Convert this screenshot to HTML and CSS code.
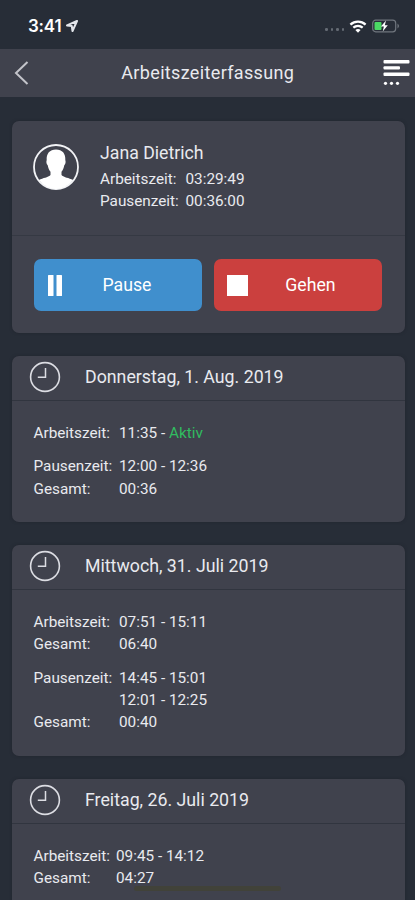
FILE: index.html
```
<!DOCTYPE html>
<html lang="de">
<head>
<meta charset="utf-8">
<meta name="viewport" content="width=device-width, initial-scale=1">
<title>Arbeitszeiterfassung</title>
<link rel="stylesheet" href="styles.css">
</head>
<body>
<div class="screen">
  <header class="status">
    <span class="clock">3:41</span>
    <svg class="location" width="12" height="12" viewBox="0 0 12 12"><path d="M11 1 1 5.400 5.800 6.100 6.500 11Z" fill="none" stroke="currentColor" stroke-width="2" stroke-linejoin="round"/></svg>
    <span class="signal"><i></i><i></i><i></i><i></i></span>
    <svg class="wifi" width="18" height="13" viewBox="0 0 18 13"><g fill="none" stroke="#fff" stroke-width="2.300"><path d="M1.400 4.600C5.800.6 12.200.6 16.600 4.600"/><path d="M4.300 7.700c2.800-2.400 6.600-2.400 9.400 0"/></g><path d="M6.400 9.900c1.500-1.300 3.700-1.300 5.200 0L9 12.700Z" fill="#fff"/></svg>
    <svg class="battery" width="28" height="14" viewBox="0 0 28 14"><rect x=".7" y="1.200" width="23" height="11.600" rx="3" fill="none" stroke="#70767e" stroke-width="1.200"/><path d="M25.500 4.500q3 2.500 0 5Z" fill="#70767e"/><rect x="2.500" y="3" width="7" height="8" rx="1" fill="#4bd964"/><path d="M14 1.400 8.900 7.600h3L10.700 12.600l5.100-6.300h-3Z" fill="#fff"/></svg>
  </header>
  <nav class="nav">
    <svg width="15" height="24" viewBox="0 0 15 24"><path d="M13.500 1 2 12 13.500 23" fill="none" stroke="#c3c4ca" stroke-width="2"/></svg>
    <h1>Arbeitszeiterfassung</h1>
    <svg width="28" height="26" viewBox="0 0 28 26" fill="#fff"><rect x="1.500" y="0" width="26" height="3.400" rx="1"/><rect x="1.500" y="6.200" width="16.500" height="3.400" rx="1"/><rect x="1.500" y="12.500" width="26" height="3.400" rx="1"/><circle cx="3.500" cy="23.300" r="1.600"/><circle cx="9.500" cy="23.300" r="1.600"/><circle cx="15.500" cy="23.300" r="1.600"/></svg>
  </nav>
  <main class="cards">
    <section class="card current">
      <div class="profile">
        <svg width="46" height="48" viewBox="0 0 46 48"><circle cx="23" cy="24" r="22" fill="none" stroke="#f2f3f6" stroke-width="1.800"/><path d="M23 6.500c6.300 0 9.800 4.200 9.300 10.400.7 2.200.2 4.300-1 5.300-.6 3.100-1.400 4.800-2.800 6.500v3.200c2.800 2.800 7.200 2.500 11.600 5.200A22 22 0 0 1 23 46 22 22 0 0 1 5.900 37.100c4.400-2.700 8.800-2.400 11.600-5.200v-3.200c-1.400-1.700-2.200-3.400-2.800-6.500-1.200-1-1.700-3.100-1-5.300C13.200 10.700 16.700 6.500 23 6.500Z" fill="#fff"/></svg>
        <div class="person">
          <h2>Jana Dietrich</h2>
          <dl class="times"><dt>Arbeitszeit:</dt><dd>03:29:49</dd><dt>Pausenzeit:</dt><dd>00:36:00</dd></dl>
        </div>
      </div>
      <div class="actions">
        <button class="btn pause"><svg width="14" height="21" viewBox="0 0 14 21" fill="#fff"><rect width="5.500" height="21" rx=".5"/><rect x="8.500" width="5.500" height="21" rx=".5"/></svg><span>Pause</span></button>
        <button class="btn leave"><svg width="21" height="21" viewBox="0 0 21 21"><rect width="21" height="21" fill="#fff"/></svg><span>Gehen</span></button>
      </div>
    </section>
    <section class="card day first">
      <div class="date"><svg width="32" height="32" viewBox="0 0 32 32" fill="none" stroke="#dcdde3"><circle cx="16" cy="16" r="14.400" stroke-width="1.600"/><path d="M16.500 7v9.300H8.800" stroke-width="1.500"/></svg><h2>Donnerstag, 1. Aug. 2019</h2></div>
      <dl class="times"><dt>Arbeitszeit:</dt><dd>11:35 - <span class="active">Aktiv</span></dd></dl>
      <dl class="times"><dt>Pausenzeit:</dt><dd>12:00 - 12:36</dd><dt>Gesamt:</dt><dd>00:36</dd></dl>
    </section>
    <section class="card day second">
      <div class="date"><svg width="32" height="32" viewBox="0 0 32 32" fill="none" stroke="#dcdde3"><circle cx="16" cy="16" r="14.400" stroke-width="1.600"/><path d="M16.500 7v9.300H8.800" stroke-width="1.500"/></svg><h2>Mittwoch, 31. Juli 2019</h2></div>
      <dl class="times"><dt>Arbeitszeit:</dt><dd>07:51 - 15:11</dd><dt>Gesamt:</dt><dd>06:40</dd></dl>
      <dl class="times"><dt>Pausenzeit:</dt><dd>14:45 - 15:01</dd><dd>12:01 - 12:25</dd><dt>Gesamt:</dt><dd>00:40</dd></dl>
    </section>
    <section class="card day third">
      <div class="date"><svg width="32" height="32" viewBox="0 0 32 32" fill="none" stroke="#dcdde3"><circle cx="16" cy="16" r="14.400" stroke-width="1.600"/><path d="M16.500 7v9.300H8.800" stroke-width="1.500"/></svg><h2>Freitag, 26. Juli 2019</h2></div>
      <dl class="times"><dt>Arbeitszeit:</dt><dd>09:45 - 14:12</dd><dt>Gesamt:</dt><dd>04:27</dd></dl>
    </section>
  </main>
  <div class="home-bar"></div>
</div>
</body>
</html>
```
FILE: styles.css
```
* { box-sizing: border-box; }
body { margin: 0; background: #272d37; }
h1, h2, dl, dd { margin: 0; font-weight: 400; }
svg { display: block; flex: none; }
.screen {
  position: relative;
  height: 900px;
  overflow: hidden;
  background: #272d37;
  color: #e9eaef;
  font-family: Roboto, "Liberation Sans", sans-serif;
}
.status { height: 49px; display: flex; align-items: center; padding: 3px 15px 0 28px; }
.clock { font: 600 17px/20px Inter, sans-serif; letter-spacing: -.2px; color: #fff; width: 36px; }
.location { color: #e3e6eb; margin-left: 2px; }
.signal { display: flex; gap: 3px; margin: 7px 5px 0 auto; }
.signal i { width: 2.500px; height: 2.500px; border-radius: 50%; background: #656b74; }
.wifi { margin-right: 5px; }
.nav {
  height: 48px;
  display: flex;
  align-items: center;
  justify-content: space-between;
  padding: 0 5px 0 14px;
  background: #40424d;
}
.nav h1 { font-size: 18px; line-height: 24px; letter-spacing: .35px; margin-left: 4.500px; }
.cards { padding: 23.500px 10.500px 0 11.500px; display: flex; flex-direction: column; gap: 22.500px; }
.card { flex: none; border-radius: 7px; background: #40424d; box-shadow: 0 0 3px #20252e; }
.current { height: 212.500px; }
.profile { height: 115.500px; display: flex; padding: 22.500px 0 0 21.500px; gap: 21px; border-bottom: 1px solid #353943; }
.person h2 { font-size: 17.700px; line-height: 22px; margin-top: -1px; margin-bottom: 4px; }
.times { display: grid; grid-template-columns: 85.500px auto; justify-content: start; font-size: 15.300px; line-height: 22.300px; white-space: nowrap; }
.times dt { grid-column: 1; }
.times dd { grid-column: 2; }
.actions { display: flex; gap: 12px; padding: 23px 22.500px 0 22px; }
.btn {
  flex: 1;
  height: 52px;
  border: 0;
  border-radius: 7px;
  padding: 0 14px;
  display: flex;
  align-items: center;
  color: #fff;
  font: 400 17.700px/24px Roboto, sans-serif;
}
.pause { background: #408fcd; }
.leave { background: #cb403e; padding-left: 13px; }
.pause span { margin-left: 41px; }
.leave span { margin-left: 37px; }
.first { height: 166.500px; }
.second { height: 211.500px; }
.third { height: 220px; }
.date { height: 45px; display: flex; align-items: center; gap: 24.500px; padding: 0 0 1px 17px; border-bottom: 1px solid #31353f; margin-bottom: 21.500px; }
.date h2 { font-size: 17.750px; line-height: 24px; }
.day .times { margin-left: 22px; margin-bottom: 11px; }
.third .times { grid-template-columns: 82.500px auto; }
.active { color: #30bd60; }
.home-bar { position: absolute; left: 134px; bottom: 9px; width: 147px; height: 5px; border-radius: 3px; background: #414239; }
```
